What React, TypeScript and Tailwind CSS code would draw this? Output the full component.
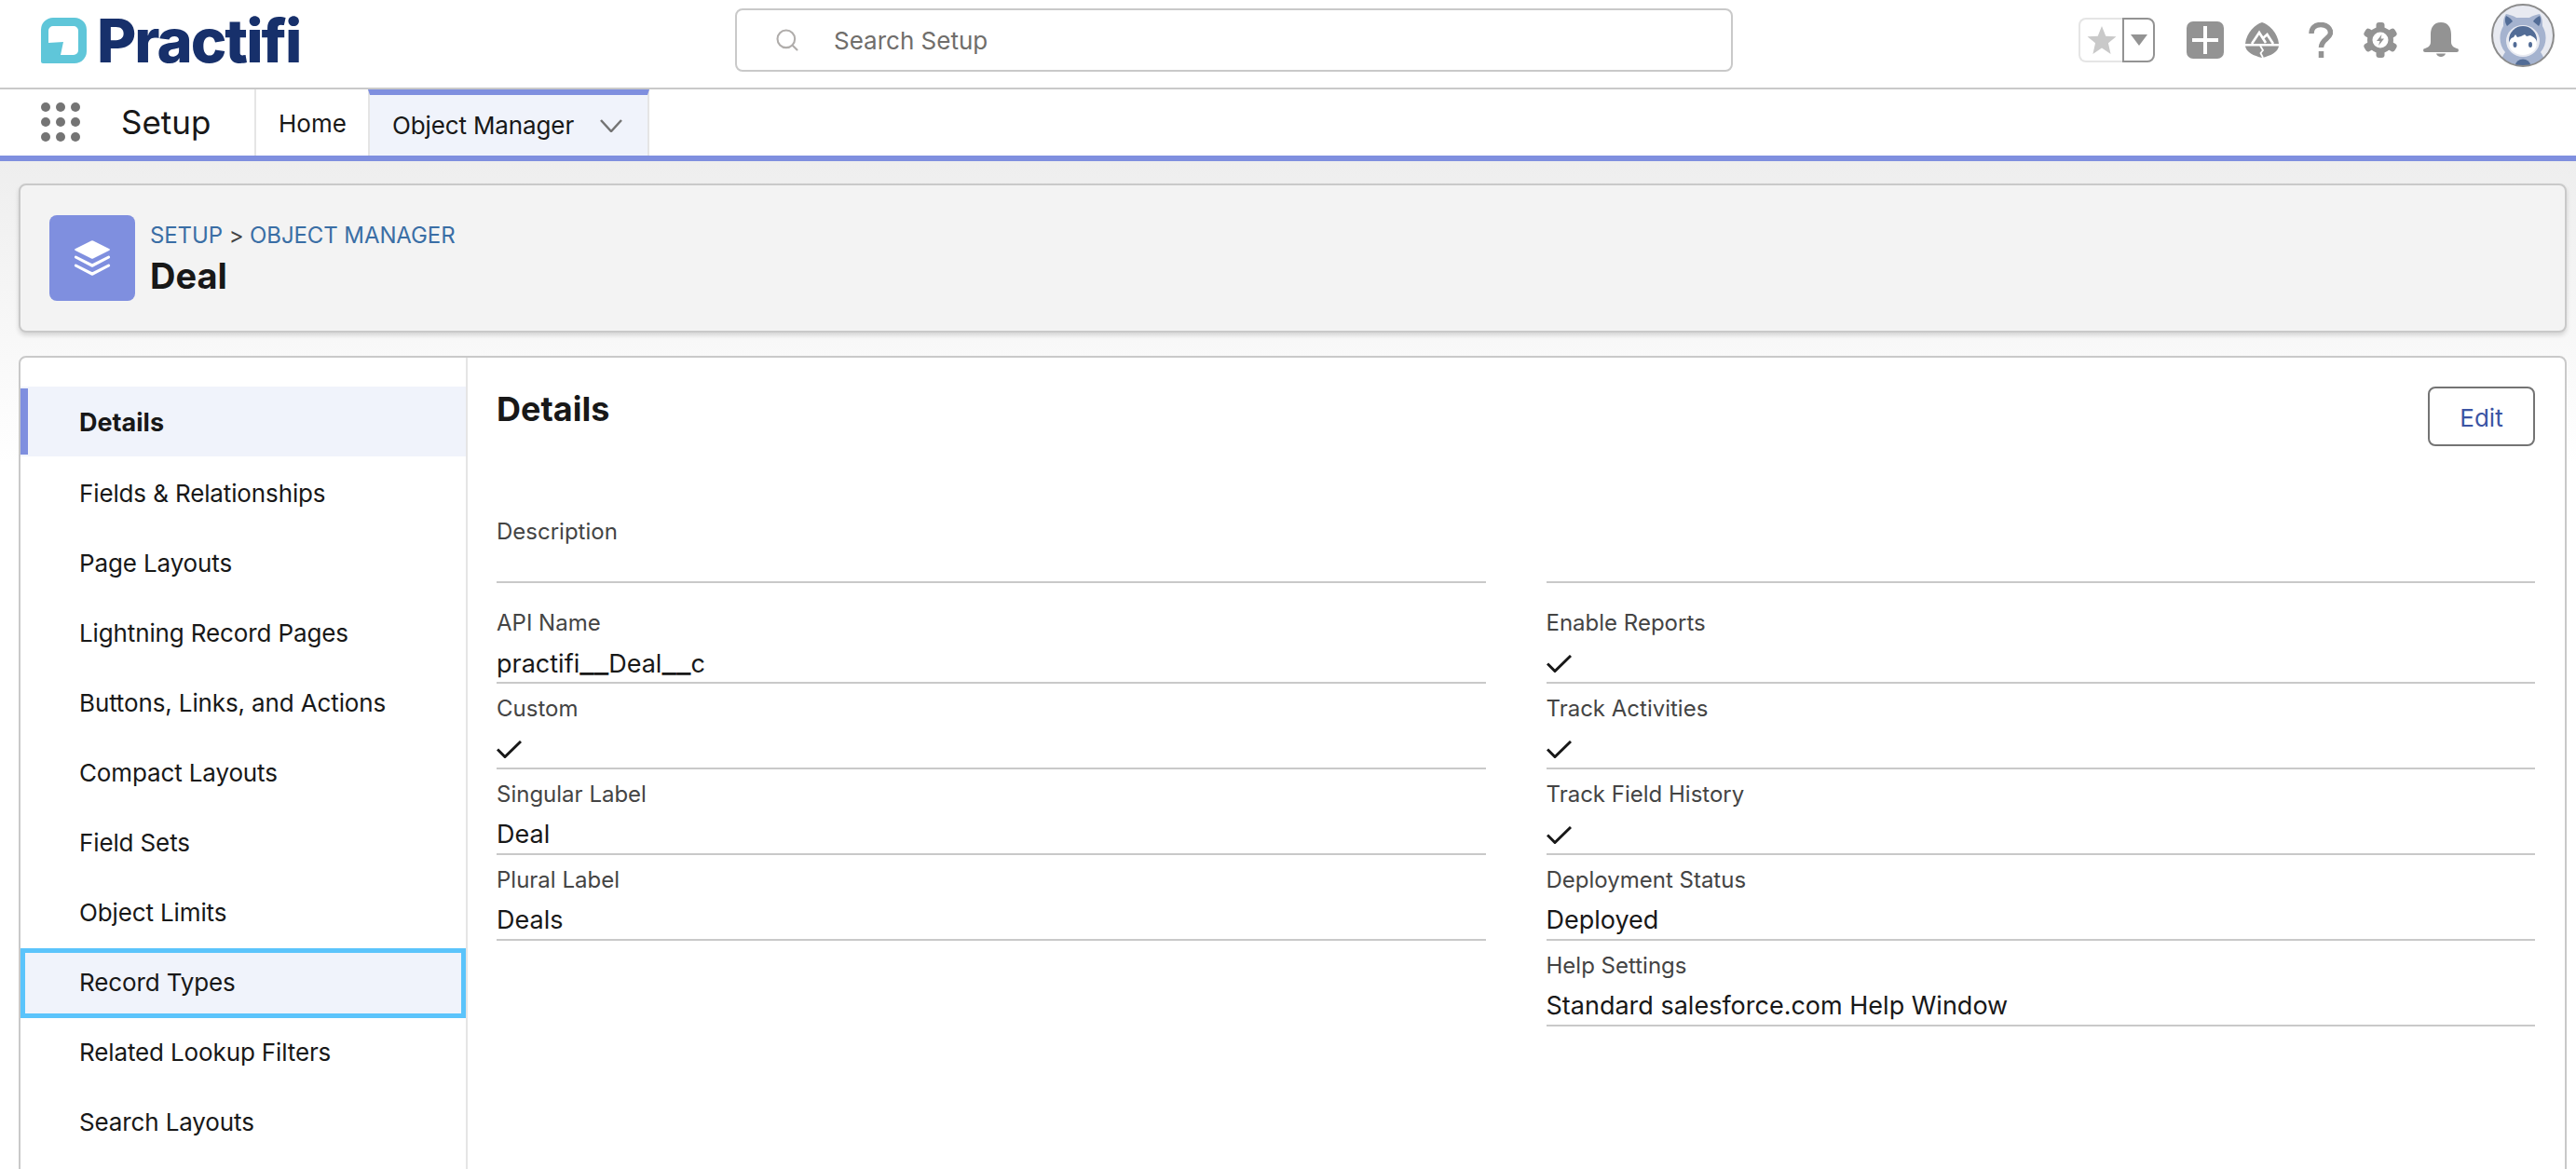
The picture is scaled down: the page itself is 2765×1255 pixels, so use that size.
import { Search } from 'lucide-react'
import type { ReactNode } from 'react'

const sideItems = [
  'Details',
  'Fields & Relationships',
  'Page Layouts',
  'Lightning Record Pages',
  'Buttons, Links, and Actions',
  'Compact Layouts',
  'Field Sets',
  'Object Limits',
  'Record Types',
  'Related Lookup Filters',
  'Search Layouts',
]

const leftFields: { label: string; value?: ReactNode; check?: boolean }[] = [
  {
    label: 'API Name',
    value: (
      <span>
        practifi<span className="text-[34px] leading-none">__</span>Deal<span className="text-[34px] leading-none">__</span>c
      </span>
    ),
  },
  { label: 'Custom', check: true },
  { label: 'Singular Label', value: 'Deal' },
  { label: 'Plural Label', value: 'Deals' },
]

const rightFields: { label: string; value?: ReactNode; check?: boolean }[] = [
  { label: 'Enable Reports', check: true },
  { label: 'Track Activities', check: true },
  { label: 'Track Field History', check: true },
  { label: 'Deployment Status', value: 'Deployed' },
  { label: 'Help Settings', value: 'Standard salesforce.com Help Window' },
]

function LogoMark() {
  return (
    <svg width="49" height="49" viewBox="0 0 49 49">
      <path
        fillRule="evenodd"
        fill="#5fc6d9"
        d="M13 0H36a13 13 0 0 1 13 13V36a13 13 0 0 1-13 13H2a2 2 0 0 1-2-2V13A13 13 0 0 1 13 0ZM13 9a5 5 0 0 0-5 5V27L24 26 21 40H35a5 5 0 0 0 5-5V14a5 5 0 0 0-5-5Z"
      />
    </svg>
  )
}

function TrailheadIcon() {
  return (
    <svg width="38" height="38" viewBox="0 0 38 38" fill="#939393">
      <path d="M19 0C12 2 2 11 1 23H37C36 11 26 2 19 0Z" />
      <path d="M1 25.5H37C36 32 28 36 19 38 10 36 2 32 1 25.5Z" />
      <path d="M8 23 16 11 23 22M20 17 24.5 13 31 23" stroke="#fff" strokeWidth="2.6" fill="none" />
      <path d="M17 25 20 30 17.5 33 20 38" stroke="#fff" strokeWidth="1.8" fill="none" />
    </svg>
  )
}

function GearIcon() {
  const teeth = [0, 60, 120, 180, 240, 300]
  return (
    <svg width="36" height="38" viewBox="0 0 36 38" fill="#939393">
      <g transform="translate(18 19)">
        <circle r="14" />
        {teeth.map((deg) => (
          <rect key={deg} x="-4.5" y="-19" width="9" height="10" rx="3" transform={`rotate(${deg})`} />
        ))}
        <circle r="8.5" fill="#fff" />
        <path d="M1.5-6-4 1H-.5L-2 6 4-1.500H.5Z" />
      </g>
    </svg>
  )
}

function BellIcon() {
  return (
    <svg width="38" height="38" viewBox="0 0 38 38" fill="#939393">
      <path d="M19 0C11 0 8 6 8 13V21C8 25 5 27 2 28A2 2 0 0 0 2 32H36A2 2 0 0 0 36 28C33 27 30 25 30 21V13C30 6 27 0 19 0Z" />
      <path d="M14 33.500H24C23 38 15 38 14 33.500Z" />
    </svg>
  )
}

function Avatar() {
  return (
    <svg width="68" height="68" viewBox="0 0 68 68">
      <defs>
        <clipPath id="avatar-clip">
          <circle cx="34" cy="34" r="33" />
        </clipPath>
      </defs>
      <g clipPath="url(#avatar-clip)">
        <rect width="68" height="68" fill="#e8eaf1" />
        <path d="M16 11C22 12 25 14 27 15H41C43 14 46 12 52 11 55 15 55 20 55 24 60 32 60 44 53 52 57 58 58 62 58 68H10C10 62 11 58 15 52 8 44 8 32 13 24 13 20 13 15 16 11Z" fill="#a5b3cf" />
        <path d="M16 13C20 15 22 17 23 19L17 24C15 21 14 17 16 13Z" fill="#526c96" />
        <path d="M52 13C48 15 46 17 45 19L51 24C53 21 54 17 52 13Z" fill="#526c96" />
        <ellipse cx="34" cy="40" rx="18" ry="17" fill="#e8eaf1" />
        <circle cx="34" cy="39" r="15" fill="#526c96" />
        <path d="M19 42C20 38 22 36 24 36L26 33 28 36 32 35 36 33 38 35 42 34C46 36 49 38 49 42 49 50 42 55 34 55 26 55 19 50 19 42Z" fill="#fff" />
        <ellipse cx="25.500" cy="44" rx="2" ry="3" fill="#526c96" />
        <ellipse cx="42" cy="44" rx="2" ry="3" fill="#526c96" />
        <ellipse cx="34" cy="66" rx="8" ry="6.500" fill="#526c96" />
      </g>
      <circle cx="34" cy="34" r="33" fill="none" stroke="#8c8c8c" strokeWidth="2" />
    </svg>
  )
}

function StackIcon() {
  return (
    <svg width="40" height="38" viewBox="0 0 40 38" fill="#fff">
      <path d="M19 .5a2 2 0 0 1 2 0L38.500 9.300a1 1 0 0 1 0 1.400L21 19.500a2 2 0 0 1-2 0L1.500 10.700a1 1 0 0 1 0-1.400Z" />
      <path d="M1 17.500a1.500 1.500 0 0 1 2-.7L19 24.800a2 2 0 0 0 2 0L37 16.800a1.500 1.500 0 0 1 2 .7 1.500 1.500 0 0 1-.5 1.800L21 28.500a2 2 0 0 1-2 0L1.500 19.300a1.500 1.500 0 0 1-.5-1.800Z" />
      <path d="M1 26.500a1.500 1.500 0 0 1 2-.7L19 33.800a2 2 0 0 0 2 0L37 25.800a1.500 1.500 0 0 1 2 .7 1.500 1.500 0 0 1-.5 1.800L21 37.500a2 2 0 0 1-2 0L1.500 28.300a1.500 1.500 0 0 1-.5-1.800Z" />
    </svg>
  )
}

function Check() {
  return (
    <svg width="27" height="19" viewBox="0 0 27 19" fill="none" stroke="#181818" strokeWidth="3">
      <path d="M1 9.500 9 17.500 26 1" />
    </svg>
  )
}

function Field({ label, value, check }: { label: string; value?: ReactNode; check?: boolean }) {
  return (
    <div className="h-[92px] border-b-2 border-[#c9c9c9]">
      <div className="pt-[13px] text-[24px] leading-[28px] text-[#444444]">{label}</div>
      <div className="mt-[11px] flex h-[36px] items-center text-[27px] leading-[36px] text-[#181818]">
        {check ? <Check /> : value}
      </div>
    </div>
  )
}

function TopBar() {
  return (
    <div className="flex h-[96px] items-center border-b-2 border-[#c9c9c9] bg-white pb-[8px]">
      <div className="flex w-[789px] items-center gap-[11px] pl-[44px]">
        <LogoMark />
        <span className="text-[65px] leading-[49px] font-extrabold tracking-[-2px] text-[#17306b]">Practifi</span>
      </div>
      <div className="flex h-[68px] w-[1071px] items-center rounded-lg border-2 border-[#c9c9c9] pl-[40px]">
        <Search size={28} strokeWidth={1.8} className="text-[#b0adab]" />
        <span className="ml-[36px] text-[26px] text-[#706e6b]">Search Setup</span>
      </div>
      <div className="ml-[371px] flex h-[48px] w-[47px] items-center justify-center rounded-l-lg border-2 border-r-0 border-[#e5e5e5] text-[#c9c9c9]">
        <svg width="32" height="32" viewBox="0 0 30 30" fill="#c9c9c9">
          <path d="M15 1 19 11 29.500 11.500 21.500 18 24 29 15 23 6 29 8.500 18 .5 11.500 11 11Z" />
        </svg>
      </div>
      <div className="flex h-[48px] w-[35px] items-center justify-center rounded-r-lg border-2 border-[#939393]">
        <svg width="18" height="12" viewBox="0 0 18 12" fill="#939393">
          <path d="M0 0H18L9 12Z" />
        </svg>
      </div>
      <div className="ml-[34px] flex h-[40px] w-[40px] items-center justify-center rounded-[7px] bg-[#939393]">
        <svg width="28" height="30" viewBox="0 0 28 30" stroke="#fff" strokeWidth="4">
          <path d="M14 0V30M0 15H28" />
        </svg>
      </div>
      <div className="ml-[22px]">
        <TrailheadIcon />
      </div>
      <div className="ml-[31px]">
        <svg width="26" height="38" viewBox="0 0 26 38" fill="none" stroke="#939393" strokeWidth="5.5">
          <path d="M3 12C3 6 7 2.500 13 2.500 19 2.500 23.500 6 23.500 11 23.500 17.500 13.500 18 13.500 27" />
          <path d="M13.500 31V38" />
        </svg>
      </div>
      <div className="ml-[33px]">
        <GearIcon />
      </div>
      <div className="ml-[28px]">
        <BellIcon />
      </div>
      <div className="ml-[35px] -mt-[10px]">
        <Avatar />
      </div>
    </div>
  )
}

function NavBar() {
  return (
    <div className="flex h-[77px] border-b-[6px] border-[#7f8fdf] bg-white">
      <div className="flex w-[275px] items-center border-r-2 border-[#e5e5e5] pl-[44px]">
        <div className="-mt-[2px] grid grid-cols-3 gap-x-[6px] gap-y-[6px]">
          {Array.from({ length: 9 }).map((_, i) => (
            <span key={i} className="h-[10px] w-[10px] rounded-full bg-[#747474]" />
          ))}
        </div>
        <span className="ml-[44px] text-[35px] text-[#181818]">Setup</span>
      </div>
      <div className="flex w-[120px] items-center pt-[1px] pl-[24px] text-[26px] text-[#181818]">Home</div>
      <div className="flex w-[302px] items-center border-t-[6px] border-r-2 border-l-2 border-t-[#7f8fdf] border-r-[#e5e5e5] border-l-[#e5e5e5] bg-[#f0f3fb] pl-[24px] text-[26px] tracking-[-0.13px] text-[#181818]">
        Object Manager
        <svg className="ml-[28px]" width="24" height="14" viewBox="0 0 24 14" fill="none" stroke="#747474" strokeWidth="2.500">
          <path d="M1 1 12 13 23 1" />
        </svg>
      </div>
    </div>
  )
}

function Sidebar() {
  return (
    <div className="w-[480px] shrink-0 border-r-2 border-[#e5e5e5] pt-[31px]">
      {sideItems.map((item) => (
        <div
          key={item}
          className={
            item === 'Details'
              ? 'relative flex h-[75px] items-center bg-[#f0f3fb] pt-[3px] pl-[63px] text-[27px] font-bold text-[#181818]'
              : 'relative flex h-[75px] items-center pt-[3px] pl-[63px] text-[26px] tracking-[-0.13px] text-[#181818]'
          }
        >
          {item === 'Details' && <span className="absolute top-[2px] bottom-[2px] left-0 w-[8px] bg-[#7f8fdf]" />}
          {item === 'Record Types' && (
            <span className="absolute top-[3px] left-0 h-[75px] w-full border-[5px] border-[#5bc4fb] bg-[#f0f3fb]" />
          )}
          <span className="relative">{item}</span>
        </div>
      ))}
    </div>
  )
}

export default function App() {
  return (
    <div className="h-[1255px] w-[2765px] overflow-hidden bg-white font-[Inter,sans-serif]">
      <TopBar />
      <NavBar />
      <div className="h-[1082px] bg-linear-to-b from-[#eeeeee] to-white to-[30%] pt-[24px] pr-[10px] pl-[20px]">
        <div className="flex h-[160px] items-center rounded-lg border-2 border-[#c9c9c9] bg-[#f3f3f3] pl-[31px] shadow-[0_3px_5px_rgba(0,0,0,0.14)]">
          <div className="flex h-[92px] w-[92px] items-center justify-center rounded-lg bg-[#7f8fdf]">
            <StackIcon />
          </div>
          <div className="ml-[16px]">
            <div className="pt-[2px] text-[24px] leading-[32px] tracking-[-0.1px] text-[#3a6ea5]">
              SETUP <span className="text-[#444444]">&gt;</span> OBJECT MANAGER
            </div>
            <div className="mt-[3px] text-[38px] leading-[48px] font-bold text-[#181818]">Deal</div>
          </div>
        </div>
        <div className="mt-[25px] flex h-[900px] rounded-t-lg border-2 border-[#c9c9c9] bg-white">
          <Sidebar />
          <div className="flex-1 pt-[31px] pr-[32px] pl-[31px]">
            <div className="flex h-[129px] items-start justify-between">
              <h2 className="pt-[2px] text-[36px] leading-[44px] font-bold text-[#181818]">Details</h2>
              <button className="h-[64px] w-[115px] rounded-lg border-2 border-[#747474] pt-[2px] text-[26px] text-[#3b54a4]">
                Edit
              </button>
            </div>
            <div className="grid grid-cols-2 gap-x-[65px]">
              <div className="h-[82px] border-b-2 border-[#c9c9c9] pt-[13px] text-[24px] leading-[28px] text-[#444444]">
                Description
              </div>
              <div className="h-[82px] border-b-2 border-[#c9c9c9]" />
            </div>
            <div className="mt-[16px] grid grid-cols-2 gap-x-[65px]">
              <div>
                {leftFields.map((f) => (
                  <Field key={f.label} {...f} />
                ))}
              </div>
              <div>
                {rightFields.map((f) => (
                  <Field key={f.label} {...f} />
                ))}
              </div>
            </div>
          </div>
        </div>
      </div>
    </div>
  )
}
